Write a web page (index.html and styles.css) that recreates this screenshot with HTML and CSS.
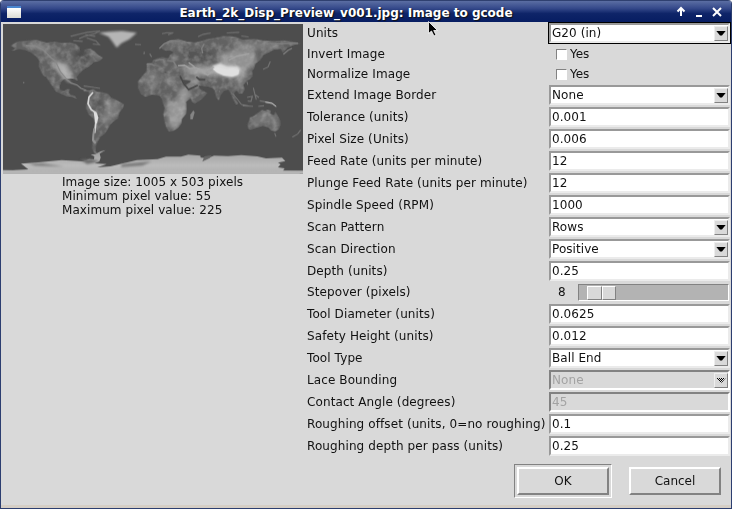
FILE: index.html
```
<!DOCTYPE html>
<html lang="en">
<head>
<meta charset="utf-8">
<title>Image to gcode</title>
<link rel="stylesheet" href="styles.css">
</head>
<body>
<div class="window">
  <header class="titlebar">
    <span class="app-icon"></span>
    <h1>Earth_2k_Disp_Preview_v001.jpg: Image to gcode</h1>
    <svg class="controls" width="46" height="12" viewBox="0 0 46 12">
      <path d="M5 10V3M1.5 5.5L5 2l3.500 3.500" fill="none" stroke="#fff" stroke-width="2"/>
      <path d="M20 9h6v2h-6z" fill="#fff"/>
      <path d="M37 2l8 8M45 2l-8 8" stroke="#fff" stroke-width="2"/>
    </svg>
  </header>
  <main class="content">
    <section class="preview">
      <svg class="map" width="300" height="150" viewBox="9 72 900 450">
        <defs>
          <filter id="soft"><feGaussianBlur stdDeviation="1.500"/></filter>
          <filter id="blur" x="-50%" y="-50%" width="200%" height="200%"><feGaussianBlur stdDeviation="7"/></filter>
          <filter id="mid" x="-50%" y="-50%" width="200%" height="200%"><feGaussianBlur stdDeviation="3"/></filter>
          <filter id="grain" x="0" y="0" width="100%" height="100%">
            <feTurbulence type="fractalNoise" baseFrequency=".06" numOctaves="4" seed="4"/>
            <feColorMatrix values="0 0 0 0 .65  0 0 0 0 .65  0 0 0 0 .65  1.800 0 0 0 -.72"/>
          </filter>
          <linearGradient id="ice" x1="0" y1="0" x2="0" y2="1"><stop offset="0" stop-color="#9c9c9c"/><stop offset=".55" stop-color="#bcbcbc"/><stop offset="1" stop-color="#a8a8a8"/></linearGradient>
          <clipPath id="land">
            <path d="M52 124l30-3 28-1 30 8 24-4 22 5 24-2 16 4 12 10 2 14-8 10 8 6 10-10 4-12 16-4 12 8 12 12 14 8-10 10-18 4-12 12-18 10-12 12-8 10 2 12-8-6-14-2-18 2-8 8-6 12 2 12 12 4 10-6 8 0-4 10 6 8 12 2 6 10-14-6-16-2-18-8-14-6-8-12-10-14-12-18-8-4-8-14-6-16 2-14-10-14-16-12-14-6-20-4-24 6 12-8-14-8z"/>
            <path d="M268 272l12-5 10 8 20 2 14 4 10 12 14 6 14 8 10 6-4 12-10 12-4 18-14 10-10 10-10 18-8 10-10 6-8 14-6 14-2 16 8 10-12-4-6-14 2-24 4-20 2-28-4-18-14-12-8-18 0-10 6-16z"/>
            <path d="M428 226l14-14 14-4 22-2 8 10 18 4 18-4 18 4 6 18 14 24 8 12 18-4-8 18-20 18 2 20-2 16-12 14-2 14-10 14-12 8-16 2-8-14-6-20-2-18 4-18-6-16-4-14-6-8-22-2-20 6-14-8-8-18 0-20z"/>
            <path d="M440 202l0-12 16-2 4-8 14-6 14-3 16 4 6-10 10-8-10-6-12 2-14-8 4-10 20-14 26-4 26 8 24 2 20-4 18-6 24-4 28-6 34 4 20 8 34-2 28 4 32 2 30-2 30 4 20 6-20 4-20 8-14 16-6-12-20 2-22 12-10 4-8 14-16 12-4 14-6 8 2 16-8 8-10 6-10 12 4 14-8 12-10 0-6-10-8 8 4 16 8 16-6 4-10-20-6-16-8-10-12 4-10 12-6 16-8-10-4-20-8-8-16-4-24-2 4 10 22 12-16 18-22 14-8-6-8-22-12-22 2-8 12-6 2-6-26-2-8-10-14 2-6 8-8-14-14-10-8 6 14 16-10 2-14-16-12 2-12 10-6 6-12 4z"/>
            <path d="M750 352l12-4 12-10 12-8 10 2 6-4 10 4-2 8 12 6 4-12 6 12 8 14 2 12-6 16-10 6-12-2-10-10-16-4-16 4-16 6-10 0-4-14z"/>
          </clipPath>
        </defs>
        <path d="M9 72h900v450H9z" fill="#4d4d4d"/>
        <g filter="url(#soft)">
          <g clip-path="url(#land)">
            <path d="M9 72h900v450H9z" fill="#626262"/>
            <g filter="url(#blur)">
              <path d="M95 128l38 12 30 32 20 18 15 12 12 20 10 22-18-3-38-62-27-27-42-15z" fill="#a3a3a3"/>
              <path d="M165 195l34-7 16 32 4 36-20-10z" fill="#aaa"/>
              <path d="M270 160l36-6 10 14-18 8z" fill="#818181"/>
              <path d="M220 155l44 0 0 25-26 8z" fill="#4c4c4c"/>
              <path d="M305 297l60 8-16 37-32 37-16-18 15-38z" fill="#7a7a7a"/>
              <path d="M292 290l22 18-8 24-18-14z" fill="#545454"/>
              <path d="M498 308l30-6 36-22-6 74-28 30-22-2z" fill="#969696"/>
              <path d="M535 270l18-8 22 16-24 38-15-2z" fill="#969696"/>
              <path d="M425 220l40-14 20 35-34 36z" fill="#757575"/>
              <path d="M492 230l30-5 14 38-34-8z" fill="#777"/>
              <path d="M535 202l54-3 52 0 20-7 67 4 16 35-60 0-48-5-50 0z" fill="#a2a2a2"/>
              <path d="M654 163l52-15 52-3 12 36-26 30-52-17-34 0z" fill="#929292"/>
              <path d="M690 124l70 0 90 7-20 15-36 0-76 8z" fill="#7c7c7c"/>
              <path d="M500 140l38-24 44 8-54 13-28 12z" fill="#747474"/>
              <path d="M545 155l65-8 42 12-50 30-40-6z" fill="#555"/>
              <path d="M552 220l48 24-24 22z" fill="#8b8b8b"/>
              <path d="M704 232l20-4 8 38-12 0z" fill="#858585"/>
              <path d="M752 346l44-12 36 12-2 38-24-13-50 7z" fill="#757575"/>
            </g>
            <path d="M9 72h900v450H9z" filter="url(#grain)" opacity=".4"/>
          </g>
          <g fill="#b5b5b5" filter="url(#mid)">
            <path d="M296 98l30-3 40-2 44 5-8 8-14 12-24 12-14 13-12-17-12-16-20-8z"/>
            <path d="M636 198l24-8 22 9 32 0 6 10-5 16-18 6-25-4-22-10z" fill="#dcdcdc"/>
            <path d="M151 183l18 2 24 17 7 25 14 22-11-1-25-25-25-29z" opacity=".45"/>
          </g>
          <path d="M638 207l10-5 16 2 15 5 16-4 22 5-2 13-18 5-25-2-20-8z" fill="#e0e0e0"/>
          <path d="M534 197l20-1 15 10 18-2 19 7 16-1 19-8M566 188l18 13M605 215l18 10 15-12M686 181l24-12 38-8" fill="none" stroke="#a5a5a5" stroke-width="4"/>
          <path d="M279 277l-12 14-3 20 10 18 13 9 3 14-3 20-3 27" fill="none" stroke="#d8d8d8" stroke-width="5"/>
          <path d="M283 385l-3 20-1 16 8 9" fill="none" stroke="#929292" stroke-width="6"/>
          <path d="M281 335l10 4 4 14-4 18-6-3z" fill="#dedede"/>
          <path d="M78 137l27 1 25 12 23 23 14 12 14 30 20 24 12 10 18 6 12 10 16 6" fill="none" stroke="#898989" stroke-width="3.500"/>
          <path d="M212 109l28-7 22-5 38-4-16 8-30 8-17 7M260 114l28 9 10 11-20-2M256 104l30 5M220 122l28 2M405 133l18 1M486 101l14-3 20 0-16 6M594 110l16-7 22-4M680 99l38-2M724 108l22 3" fill="none" stroke="#6c6c6c" stroke-width="4"/>
          <path d="M478 146l14-14 20-9 28 1M608 160l-3-15 8-14M808 130l20 2 32-2 34 0M850 163l14-12 12-6M466 183l12-4 12 0 4 9M502 182l18 2 10 17M440 193l14 0 10 4" fill="none" stroke="#808080" stroke-width="4"/>
          <path d="M251 272l22 2M251 258l30 4M280 262l20 3M698 281l12 14 14 18 22 5M728 317l31 2M741 292l16-3-4 15-10-1M765 285l4 14M760 263l5 21 12 9M779 302l18 4 18 3 15 12M775 319l17-2M789 208l15-7 7-17M741 244l2 10M657 272l3 5M824 399l4 11M877 411l16-9 9-12M449 161l6 10M433 155l-1 8" fill="none" stroke="#757575" stroke-width="3.500"/>
          <path d="M796 306l20 4 12 9" fill="none" stroke="#ccc" stroke-width="3"/>
          <path d="M571 358l0-14 9-13 4 6-6 21z" fill="#858585"/>
          <path d="M540 228l12 24 14 17 27-13M589 231l10 8 17 0" fill="none" stroke="#474747" stroke-width="5"/>
          <path d="M9 514l38-4 38-2-22-17 44-3 78-8 65 4 17-7 15 1 1-9-11-5 14-2 16-8 15-4-18 11 3 12-4 11-14 6 36 2-28 10 39-3 80-19 62-3 25-7 45 0 22-6 36 3 1 6 22 1 18-7 42 1 40-3 48 4 26 6 48-2 10 10-22 5 8 5-8 9 20 3-6 8 51 5v16H9z" fill="url(#ice)"/>
          <path d="M365 492l90-8-28 13-64 4zM85 491l42-1 65 10-87-3z" fill="#777" filter="url(#mid)"/>
          <path d="M240 479l35-2 25 7-38 8z" fill="#6c6c6c" filter="url(#mid)"/>
          <path d="M607 485l22-11 6-9-22 4z" fill="#666"/>
          <path d="M9 510l150 2 300-2 450 2v10H9z" fill="#b5b5b5"/>
          <path d="M69 246h4v3h-4z" fill="#888"/>
        </g>
      </svg>
      <p class="info">Image size: 1005 x 503 pixels<br>Minimum pixel value: 55<br>Maximum pixel value: 225</p>
    </section>
    <section class="options">
      <div class="row focused"><label>Units</label><div class="field">G20 (in)<i class="arrow"></i></div></div>
      <div class="row short"><label>Invert Image</label><div class="check"><i></i>Yes</div></div>
      <div class="row short"><label>Normalize Image</label><div class="check"><i></i>Yes</div></div>
      <div class="row"><label>Extend Image Border</label><div class="field">None<i class="arrow"></i></div></div>
      <div class="row"><label>Tolerance (units)</label><div class="field">0.001</div></div>
      <div class="row"><label>Pixel Size (Units)</label><div class="field">0.006</div></div>
      <div class="row"><label>Feed Rate (units per minute)</label><div class="field">12</div></div>
      <div class="row"><label>Plunge Feed Rate (units per minute)</label><div class="field">12</div></div>
      <div class="row"><label>Spindle Speed (RPM)</label><div class="field">1000</div></div>
      <div class="row"><label>Scan Pattern</label><div class="field">Rows<i class="arrow"></i></div></div>
      <div class="row"><label>Scan Direction</label><div class="field">Positive<i class="arrow"></i></div></div>
      <div class="row"><label>Depth (units)</label><div class="field">0.25</div></div>
      <div class="row slider"><label>Stepover (pixels)</label><span>8</span><div class="track"><div class="thumb"><i></i><i></i></div></div></div>
      <div class="row"><label>Tool Diameter (units)</label><div class="field">0.0625</div></div>
      <div class="row"><label>Safety Height (units)</label><div class="field">0.012</div></div>
      <div class="row"><label>Tool Type</label><div class="field">Ball End<i class="arrow"></i></div></div>
      <div class="row disabled"><label>Lace Bounding</label><div class="field">None<i class="arrow"></i></div></div>
      <div class="row disabled"><label>Contact Angle (degrees)</label><div class="field">45</div></div>
      <div class="row"><label>Roughing offset (units, 0=no roughing)</label><div class="field">0.1</div></div>
      <div class="row"><label>Roughing depth per pass (units)</label><div class="field">0.25</div></div>
      <div class="actions"><div class="default"><button>OK</button></div><button>Cancel</button></div>
    </section>
  </main>
  <svg class="cursor" width="10" height="17" viewBox="0 0 10 17"><path d="M.5.5v12l3-2.500 2.500 5 2-1-2.300-4.500h3.800z" fill="#000" stroke="#fff" stroke-width=".8"/></svg>
</div>
</body>
</html>
```
FILE: styles.css
```
* { box-sizing: border-box; }
body { margin: 0; background: #fff; font: 12px/14px "DejaVu Sans", sans-serif; color: #111; }
.window {
  position: relative;
  width: 732px;
  height: 509px;
  border: 1px solid #2c3e70;
  border-top: 0;
  border-radius: 4px 4px 0 0;
  background: #d9d9d9;
  overflow: hidden;
}
.titlebar {
  display: flex;
  align-items: center;
  height: 22px;
  padding: 2px 9px 0 6px;
  border-top: 1px solid #2f4070;
  background: linear-gradient(#5b6ea3, #35498a 35%, #0e2468 60%, #071d62);
}
.app-icon { width: 14px; height: 12px; margin-bottom: 2px; border-top: 2px solid #4a86cf; background: linear-gradient(#fff, #dcdcd4); }
h1 { flex: 1; margin: 0 5px 0 0; text-align: center; font-size: 12px; line-height: 16px; color: #fff; text-shadow: 1px 1px 1px #111; }
.controls { margin-bottom: 1px; }
.content { display: flex; height: 486px; border-bottom: 3px solid #d5cec5; }
.preview { width: 304px; padding: 2px 0 0 2px; }
.map { display: block; }
.info { width: max-content; margin: 1px 0 0 59px; letter-spacing: .07px; }
.options { flex: 1; }
.row { display: flex; align-items: center; height: 22px; padding-left: 2px; }
.row label { width: 241px; white-space: nowrap; letter-spacing: .1px; }
.row.short { height: 20px; }
.field {
  display: flex;
  align-items: center;
  justify-content: space-between;
  width: 181px;
  height: 20px;
  margin-left: 1px;
  padding: 0 0 0 1px;
  border: 2px solid;
  border-color: #999 #ebebeb #ebebeb #999;
  background: #fff;
  letter-spacing: .07px;
}
.focused .field { outline: 1px solid #000; }
.arrow {
  display: flex;
  align-items: center;
  justify-content: center;
  width: 14px;
  height: 15px;
  border: 1px solid;
  border-color: #eee #828282 #828282 #eee;
  background: #d9d9d9;
}
.arrow::before { content: ""; width: 10px; height: 5px; background: #000; clip-path: polygon(0 0, 100% 0, 60% 100%, 40% 100%); }
.disabled .field { color: #a3a3a3; background: #d9d9d9; border-color: #828282 #fff #fff #828282; }
.disabled .arrow::before { background: repeating-conic-gradient(#000 0 25%, #ddd 0 50%) 0 0 / 2px 2px; }
.check { display: flex; align-items: center; gap: 3px; margin-left: 8px; }
.check i { width: 11px; height: 11px; border: 1px solid; border-color: #828282 #fff #fff #828282; background: #fff; }
.slider { height: 21px; padding-bottom: 1px; }
.slider span { width: 8px; margin: 0 12px 0 10px; }
.track { width: 151px; height: 17px; padding: 1px 0 0 8px; border: 1px solid; border-color: #828282 #fff #fff #828282; background: #b3b3b3; }
.thumb { display: flex; width: 29px; height: 14px; }
.thumb i { flex: 1; border: 1px solid; border-color: #fff #828282 #828282 #fff; background: #d9d9d9; }
.actions { display: flex; align-items: center; padding: 7px 0 0 209px; gap: 17px; }
.default { padding: 2px; border: 1px solid; border-color: #828282 #fff #fff #828282; }
button {
  display: block;
  width: 92px;
  height: 28px;
  padding: 0;
  border: 2px solid;
  border-color: #fff #828282 #828282 #fff;
  background: #d9d9d9;
  font: inherit;
  color: #111;
}
.cursor { position: absolute; left: 427px; top: 21px; }
```
